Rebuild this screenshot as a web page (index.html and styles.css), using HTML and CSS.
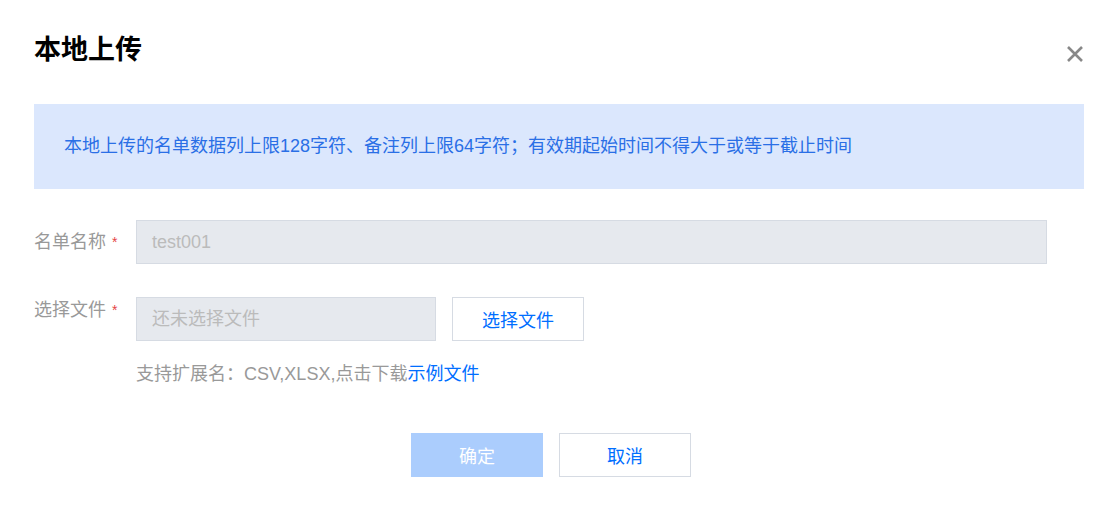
FILE: index.html
```html
<!DOCTYPE html>
<html lang="zh-CN">
<head>
  <meta charset="UTF-8">
  <meta name="viewport" content="width=device-width, initial-scale=1.0">
  <title>本地上传</title>
  <link rel="stylesheet" href="styles.css">
</head>
<body>
  <div class="dialog">
    <div class="header">
      <h1>本地上传</h1>
      <button class="close" aria-label="关闭">
        <svg width="18" height="18" viewBox="0 0 18 18">
          <path d="M2 2 L16 16 M16 2 L2 16" stroke="#888" stroke-width="2.6" stroke-linecap="butt"/>
        </svg>
      </button>
    </div>

    <div class="notice">本地上传的名单数据列上限128字符、备注列上限64字符；有效期起始时间不得大于或等于截止时间</div>

    <div class="form">
      <div class="form-row row-name">
        <label class="label">名单名称<span class="star">*</span></label>
        <div class="input input-wide">test001</div>
      </div>

      <div class="form-row row-file">
        <label class="label">选择文件<span class="star">*</span></label>
        <div class="field">
          <div class="file-line">
            <div class="input input-file">还未选择文件</div>
            <button class="btn">选择文件</button>
          </div>
          <p class="hint">支持扩展名：CSV,XLSX,点击下载<a href="#">示例文件</a></p>
        </div>
      </div>
    </div>

    <div class="footer">
      <button class="btn btn-primary">确定</button>
      <button class="btn">取消</button>
    </div>
  </div>
</body>
</html>
```

FILE: styles.css
```css
body, html {
  margin: 0;
  background: #fff;
}

body {
  font-family: "Liberation Sans", "Noto Sans CJK SC", sans-serif;
  font-size: 18px;
  color: #999;
}

.dialog {
  padding: 32px 29px 36px 34px;
}

.header {
  display: flex;
  justify-content: space-between;
  align-items: center;
}

.header h1 {
  margin: 0;
  font-size: 27px;
  line-height: 36px;
  font-weight: bold;
  color: #000;
}

.close {
  border: none;
  background: none;
  padding: 0;
  margin: 8px 0 0 0;
  width: 18px;
  height: 18px;
  cursor: pointer;
}

.notice {
  margin-top: 36px;
  padding: 30px 30px;
  line-height: 25px;
  background-color: #dbe7fd;
  color: #2a6fe6;
}

.form {
  margin-top: 31px;
}

.form-row {
  display: flex;
}

.row-name {
  align-items: center;
  margin-bottom: 33px;
}

.label {
  width: 102px;
  flex-shrink: 0;
  color: #999;
  white-space: nowrap;
}

.row-name .label {
  line-height: 44px;
}

.row-file .label {
  line-height: 26px;
}

.star {
  color: #e54545;
  font-size: 14px;
  margin-left: 6px;
  vertical-align: 1px;
}

.input {
  box-sizing: border-box;
  height: 44px;
  line-height: 42px;
  padding: 0 15px;
  background-color: #e6e9ee;
  border: 1px solid #d6dbe3;
  color: #bbb;
}

.input-wide {
  flex: 1;
  margin-right: 37px;
}

.field {
  flex: 1;
}

.file-line {
  display: flex;
  gap: 16px;
}

.input-file {
  width: 300px;
}

.btn {
  box-sizing: border-box;
  width: 132px;
  height: 44px;
  border: 1px solid #d6dbe3;
  background-color: #fff;
  color: #006eff;
  font-family: inherit;
  font-size: 18px;
  cursor: pointer;
}

.hint {
  margin: 21px 0 0 0;
  line-height: 24px;
  color: #999;
}

.hint a {
  color: #006eff;
  text-decoration: none;
}

.footer {
  display: flex;
  justify-content: center;
  gap: 16px;
  margin-top: 47px;
  padding-right: 16px;
}

.btn-primary {
  background-color: #abcdfd;
  border-color: #abcdfd;
  color: #fff;
}
```
